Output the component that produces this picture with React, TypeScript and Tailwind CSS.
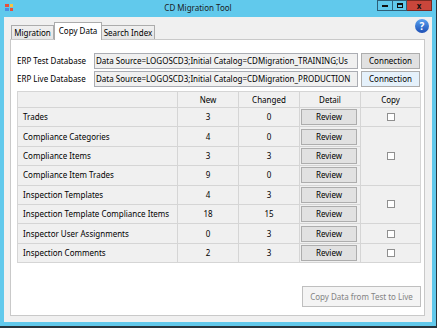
import { useState } from "react"

type Row = { name: string; added: number; changed: number }

const rows: Row[] = [
    { name: "Trades", added: 3, changed: 0 },
    { name: "Compliance Categories", added: 4, changed: 0 },
    { name: "Compliance Items", added: 3, changed: 3 },
    { name: "Compliance Item Trades", added: 9, changed: 0 },
    { name: "Inspection Templates", added: 4, changed: 3 },
    { name: "Inspection Template Compliance Items", added: 18, changed: 15 },
    { name: "Inspector User Assignments", added: 0, changed: 3 },
    { name: "Inspection Comments", added: 2, changed: 3 },
]

// copy checkboxes cover groups of rows (start row, span)
const copyGroups = [
    { start: 2, rowClass: "row-start-2 row-span-1" },
    { start: 3, rowClass: "row-start-3 row-span-3" },
    { start: 6, rowClass: "row-start-6 row-span-2" },
    { start: 8, rowClass: "row-start-8 row-span-1" },
    { start: 9, rowClass: "row-start-9 row-span-1" },
]

const rowStarts = [
    "row-start-2",
    "row-start-3",
    "row-start-4",
    "row-start-5",
    "row-start-6",
    "row-start-7",
    "row-start-8",
    "row-start-9",
]

function Checkbox({ checked, onToggle }: { checked: boolean; onToggle: () => void }) {
    return (
        <button
            type="button"
            onClick={onToggle}
            className="flex h-[8px] w-[8px] items-center justify-center border border-[#8f8f8f] bg-white text-[6px] leading-none"
        >
            {checked ? "✓" : ""}
        </button>
    )
}

function WinButton({ children, className = "" }: { children: React.ReactNode; className?: string }) {
    return (
        <button
            type="button"
            className={
                "flex items-center justify-center border border-[#adadad] bg-[#e1e1e1] text-[8px] leading-none text-black " +
                className
            }
        >
            {children}
        </button>
    )
}

export default function App() {
    const [copy, setCopy] = useState([false, false, false, false, false])

    return (
        <div className="h-[328px] w-[437px] overflow-hidden bg-[#26343d] font-['Noto_Sans',sans-serif] text-[8px] text-black">
            <div className="flex h-[326px] w-[436px] flex-col bg-[#61c9ec] pb-[4px] pl-[4px] pr-[4px]">
                {/* title bar */}
                <div className="flex h-[17px] shrink-0 items-start">
                    <div className="mt-[4px] ml-[1px] grid h-[7px] w-[8px] grid-cols-2 gap-[1px]">
                        <div className="bg-[#e8503a]" />
                        <div className="bg-[#f6c343]" />
                        <div className="bg-[#4a8fe0]" />
                        <div className="bg-[#e8503a]" />
                    </div>
                    <div className="flex-1 pt-[3px] pl-[6px] text-center text-[8px] leading-[10px] text-[#1c1c1c]">
                        CD Migration Tool
                    </div>
                    <div className="flex">
                        <div className="flex h-[11px] w-[16px] items-end justify-center border border-[#2d5f78] pb-[3px]">
                            <div className="h-[2px] w-[6px] bg-[#111]" />
                        </div>
                        <div className="flex h-[11px] w-[14px] items-center justify-center border border-l-0 border-[#2d5f78]">
                            <div className="h-[5px] w-[6px] border border-t-2 border-[#111]" />
                        </div>
                        <div className="flex h-[11px] w-[25px] items-center justify-center border border-l-0 border-[#7a2a22] bg-[#c9463b] text-[8px] font-bold leading-none text-[#111]">
                            x
                        </div>
                    </div>
                </div>

                {/* client area */}
                <div className="flex flex-1 flex-col bg-[#f0f0f0] pb-[6px] pl-[6px] pr-[7px]">
                    <div className="flex h-[22px] shrink-0 items-end pl-[1px]">
                        <div className="flex h-[14px] w-[43px] items-center justify-center border border-b-0 border-[#acacac] bg-gradient-to-b from-[#f0f0f0] to-[#e5e5e5] pt-[1px]">
                            Migration
                        </div>
                        <div className="relative z-10 -mb-px flex h-[18px] w-[48px] items-start justify-center border border-b-0 border-[#acacac] bg-white pt-[2px]">
                            Copy Data
                        </div>
                        <div className="flex h-[14px] w-[53px] items-center justify-center border border-b-0 border-l-0 border-[#acacac] bg-gradient-to-b from-[#f0f0f0] to-[#e5e5e5] pt-[1px]">
                            Search Index
                        </div>
                        <div className="mt-[2px] mb-[5px] ml-auto mr-[-4px] flex h-[14px] w-[14px] items-center justify-center self-start rounded-full bg-gradient-to-b from-[#5aa2f0] to-[#1f4fb5] text-[10px] font-bold leading-none text-white">
                            ?
                        </div>
                    </div>

                    {/* tab page */}
                    <div className="flex flex-1 flex-col border border-[#c9c9c9] bg-white pl-[6px] pr-[4px] pt-[13px]">
                        <div className="flex h-[16px] items-center">
                            <div className="w-[77px]">ERP Test Database</div>
                            <div className="h-[16px] w-[264px] overflow-hidden whitespace-nowrap border border-[#abadb3] bg-[#f0f0f0] pl-[1px] leading-[14px]">
                                Data Source=LOGOSCD3;Initial Catalog=CDMigration_TRAINING;Us
                            </div>
                            <WinButton className="ml-[3px] h-[16px] w-[59px]">Connection</WinButton>
                        </div>
                        <div className="mt-[2px] flex h-[16px] items-center">
                            <div className="w-[77px]">ERP Live Database</div>
                            <div className="h-[16px] w-[264px] overflow-hidden whitespace-nowrap border border-[#abadb3] bg-[#f0f0f0] pl-[1px] leading-[14px]">
                                Data Source=LOGOSCD3;Initial Catalog=CDMigration_PRODUCTION
                            </div>
                            <WinButton className="ml-[3px] h-[16px] w-[59px] border-[#3c7fb1] bg-[#e5f1fb]">
                                Connection
                            </WinButton>
                        </div>

                        {/* data grid */}
                        <div className="mt-[4px] grid w-[404px] grid-cols-[159px_60px_60px_60px_59px] grid-rows-[15px_repeat(8,18.4px)] gap-px border border-[#d5d5d5] bg-[#d5d5d5]">
                            <div className="row-start-1 bg-[#f0f0f0]" />
                            <div className="row-start-1 flex items-center justify-center bg-[#f0f0f0]">New</div>
                            <div className="row-start-1 flex items-center justify-center bg-[#f0f0f0]">Changed</div>
                            <div className="row-start-1 flex items-center justify-center bg-[#f0f0f0]">Detail</div>
                            <div className="row-start-1 flex items-center justify-center bg-[#f0f0f0]">Copy</div>

                            {rows.map((r, i) => (
                                <div key={r.name} className={"col-start-1 flex items-center bg-[#f0f0f0] pl-[5px] " + rowStarts[i]}>
                                    {r.name}
                                </div>
                            ))}
                            {rows.map((r, i) => (
                                <div key={r.name + "n"} className={"col-start-2 flex items-center justify-center bg-[#f0f0f0] " + rowStarts[i]}>
                                    {r.added}
                                </div>
                            ))}
                            {rows.map((r, i) => (
                                <div key={r.name + "c"} className={"col-start-3 flex items-center justify-center bg-[#f0f0f0] " + rowStarts[i]}>
                                    {r.changed}
                                </div>
                            ))}
                            {rows.map((r, i) => (
                                <div key={r.name + "d"} className={"col-start-4 flex items-center bg-[#f0f0f0] pl-[1px] " + rowStarts[i]}>
                                    <WinButton className="h-[16px] w-[56px]">Review</WinButton>
                                </div>
                            ))}
                            {copyGroups.map((g, i) => (
                                <div key={g.start} className={"col-start-5 flex items-center justify-center bg-[#f0f0f0] " + g.rowClass}>
                                    <Checkbox
                                        checked={copy[i]}
                                        onToggle={() => setCopy(copy.map((c, j) => (j === i ? !c : c)))}
                                    />
                                </div>
                            ))}
                        </div>

                        <div className="mt-[23px] flex w-[404px] justify-end">
                            <button
                                type="button"
                                disabled
                                className="h-[21px] w-[119px] border border-[#bfbfbf] bg-[#f4f4f4] text-[8px] text-[#838383]"
                            >
                                Copy Data from Test to Live
                            </button>
                        </div>
                    </div>
                </div>
            </div>
        </div>
    )
}
